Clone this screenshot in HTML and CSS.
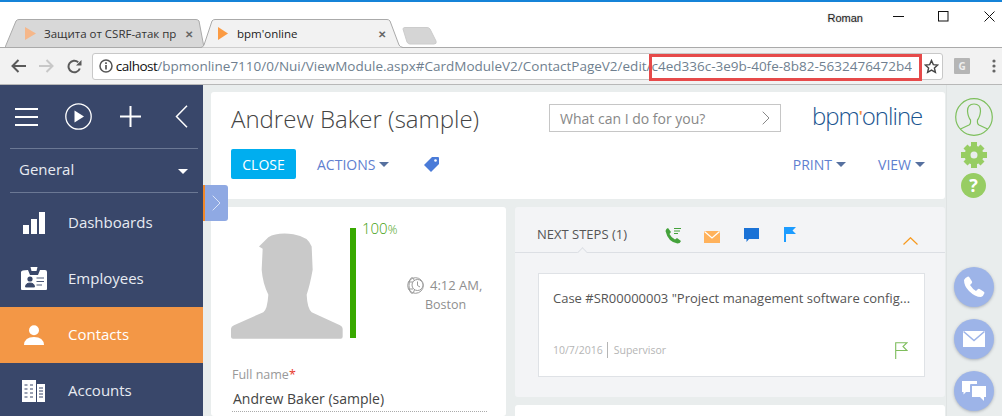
FILE: index.html
```html
<!DOCTYPE html>
<html lang="en">
<head>
<meta charset="utf-8">
<title>bpm'online</title>
<link rel="stylesheet" href="styles.css">
</head>
<body>
<div class="window">
  <header class="titlebar">
    <div class="tabs">
      <div class="tab tab-inactive">
        <svg class="tab-shape" width="206" height="29" viewBox="0 0 206 29"><path d="M0 28.500 L11 2 Q12 .5 14 .5 H191 Q193 .5 194 2 L199 28.500 Z" fill="#d8d8d8" stroke="#aaa"/></svg>
        <svg class="favicon faded" width="11" height="13" viewBox="0 0 11 13"><path d="M0 0 L11 6.500 L0 13 Z"/></svg>
        <span class="tab-title">Защита от CSRF-атак пр</span>
        <span class="tab-close">✕</span>
      </div>
      <div class="tab tab-active">
        <svg class="tab-shape" width="206" height="29" viewBox="0 0 206 29"><path d="M0 28.500 H1 Q3 28 4 26 L12 2 Q13 .5 15 .5 H187 Q189 .5 190 2 L199 26 Q200 28 203 28.500 H206" fill="#f2f2f2" stroke="#aaa"/></svg>
        <svg class="favicon" width="10" height="13" viewBox="0 0 10 13"><path d="M0 0 L10 6.500 L0 13 Z"/></svg>
        <span class="tab-title active-title">bpm'online</span>
        <span class="tab-close">✕</span>
      </div>
      <svg class="new-tab" width="36" height="18" viewBox="0 0 36 18"><path d="M1 2 Q1 .5 3 .5 H25 Q27 .5 28 2 L34 14 Q35 17 32 17 H8 Q6 17 5 15 Z" fill="#d5d5d5" stroke="#ccc"/></svg>
    </div>
    <div class="winctl">
      <span class="user">Roman</span>
      <svg class="ctl ctl-min" width="11" height="11" viewBox="0 0 11 11"><path d="M0 5.500 H11" stroke="#111"/></svg>
      <svg class="ctl ctl-max" width="11" height="11" viewBox="0 0 11 11"><rect x=".5" y=".5" width="9.500" height="9.500" fill="none" stroke="#111"/></svg>
      <svg class="ctl ctl-close" width="11" height="11" viewBox="0 0 11 11"><path d="M.5 .5 L10.500 10.500 M10.500 .5 L.5 10.500" stroke="#111"/></svg>
    </div>
  </header>

  <nav class="toolbar">
    <svg class="tool" width="15" height="14" viewBox="0 0 15 14"><path d="M15 7 H2 M7.500 1 L1.500 7 L7.500 13" fill="none" stroke="#5a5a5a" stroke-width="2"/></svg>
    <svg class="tool tool-fwd" width="15" height="14" viewBox="0 0 15 14"><path d="M0 7 H13 M7.500 1 L13.500 7 L7.500 13" fill="none" stroke="#c8c8c8" stroke-width="2"/></svg>
    <svg class="tool tool-reload" width="15" height="15" viewBox="0 0 15 15"><path d="M12.800 9.500 A5.800 5.800 0 1 1 11.200 3.200" fill="none" stroke="#5a5a5a" stroke-width="2"/><path d="M9 6.500 H14.500 V1 Z" fill="#5a5a5a"/></svg>
    <div class="omnibox">
      <svg class="info" width="14" height="14" viewBox="0 0 14 14"><circle cx="7" cy="7" r="6" fill="none" stroke="#555" stroke-width="1.500"/><path d="M7 6 V10.500 M7 3.300 V5" stroke="#555" stroke-width="1.700"/></svg>
      <div class="url"><div class="url-text"><span class="url-host">localhost</span>/bpmonline7110/0/Nui/ViewModule.aspx#CardModuleV2/ContactPageV2/edit/c4ed336c-3e9b-40fe-8b82-5632476472b4</div></div>
      <svg class="star" width="15" height="15" viewBox="0 0 15 15"><path d="M7.500 1.500 L9.300 5.600 L13.800 6 L10.400 9 L11.400 13.400 L7.500 11.100 L3.600 13.400 L4.600 9 L1.200 6 L5.700 5.600 Z" fill="none" stroke="#444" stroke-width="1.400"/></svg>
      <div class="highlight"></div>
    </div>
    <span class="ext">G</span>
    <svg class="menu-dots" width="4" height="14" viewBox="0 0 4 14"><circle cx="2" cy="2" r="1.600" fill="#666"/><circle cx="2" cy="7" r="1.600" fill="#666"/><circle cx="2" cy="12" r="1.600" fill="#666"/></svg>
  </nav>

  <div class="app">
    <aside class="sidebar">
      <div class="side-tools">
        <svg width="23" height="18" viewBox="0 0 23 18"><path d="M0 1 H23 M0 9 H23 M0 17 H23" stroke="#fff" stroke-width="2"/></svg>
        <svg class="st-play" width="27" height="27" viewBox="0 0 27 27"><circle cx="13.500" cy="13.500" r="12.700" fill="none" stroke="#fff" stroke-width="1.300"/><path d="M9.500 7.500 L19 13.500 L9.500 19.500 Z" fill="#fff"/></svg>
        <svg class="st-plus" width="21" height="21" viewBox="0 0 21 21"><path d="M10.500 0 V21 M0 10.500 H21" stroke="#fff" stroke-width="2"/></svg>
        <svg class="st-back" width="13" height="23" viewBox="0 0 13 23"><path d="M12 .7 L1.500 11.500 L12 22.300" fill="none" stroke="#fff" stroke-width="1.500"/></svg>
      </div>
      <div class="side-group">
        <span>General</span>
        <i class="side-caret"></i>
      </div>
      <ul class="side-menu">
        <li class="side-item">
          <span class="side-icon"><svg width="22" height="22" viewBox="0 0 22 22"><path d="M0 13 H6 V22 H0 Z M8 7 H14 V22 H8 Z M16 0 H22 V22 H16 Z" fill="#fff"/></svg></span>
          <span>Dashboards</span>
        </li>
        <li class="side-item">
          <span class="side-icon"><svg width="26" height="24" viewBox="0 0 26 24"><path d="M7 3 Q0 3 0 5 V22 Q0 23 1 23 H25 Q26 23 26 22 V5 Q26 3 24 3 H19 L17 8 H9 Z M9.500 0 H16.500 L15.500 4 H10.500 Z" fill="#fff"/><circle cx="9" cy="12" r="2.600" fill="#39476a"/><path d="M4.500 20 Q4.500 16 9 16 Q13.500 16 13.500 20 Z M15.500 11 H23 M15.500 14.500 H23 M15.500 18 H21" fill="#39476a" stroke="#39476a" stroke-width=".9"/></svg></span>
          <span>Employees</span>
        </li>
        <li class="side-item is-active">
          <span class="side-icon"><svg width="20" height="20" viewBox="0 0 20 20"><circle cx="10" cy="5.200" r="5" fill="#fff"/><path d="M0 20 Q.5 12 10 12 Q19.500 12 20 20 Z" fill="#fff"/></svg></span>
          <span>Contacts</span>
        </li>
        <li class="side-item">
          <span class="side-icon"><svg width="23" height="22" viewBox="0 0 23 22"><path d="M0 0 H14 V22 H0 Z M15 4 H23 V22 H15 Z" fill="#fff"/><path d="M2.500 5 H5.500 M8 5 H11 M2.500 9 H5.500 M8 9 H11 M2.500 13 H5.500 M8 13 H11 M2.500 17 H5.500 M8 17 H11 M17 8 H21 M17 11 H21 M17 14 H21 M17 17 H21" stroke="#39476a" stroke-width="1.200"/></svg></span>
          <span>Accounts</span>
        </li>
      </ul>
    </aside>
    <button class="side-toggle" type="button" aria-label="Expand">
      <svg width="9" height="16" viewBox="0 0 9 16"><path d="M.7 .7 L8 8 L.7 15.300" fill="none" stroke="#dbe4f7" stroke-width="1"/></svg>
    </button>

    <main class="content">
      <section class="page-head card">
        <div class="head-top">
          <h1 class="page-title">Andrew Baker (sample)</h1>
          <div class="search">
            <span>What can I do for you?</span>
            <svg width="8" height="14" viewBox="0 0 8 14"><path d="M.7 .7 L7 7 L.7 13.300" fill="none" stroke="#888" stroke-width="1"/></svg>
          </div>
          <div class="logo">bpm<span class="logo-tick">'</span>online</div>
        </div>
        <div class="head-actions">
          <button class="btn-close" type="button">CLOSE</button>
          <span class="link-btn">ACTIONS<i class="caret"></i></span>
          <svg class="tag" width="15" height="15" viewBox="0 0 15 15"><path d="M8 0 H14 Q15 0 15 1 V7 L7 15 L0 8 Z" fill="#4a7bd8"/><circle cx="11.500" cy="3.500" r="1.300" fill="#fff"/></svg>
          <span class="link-btn push-right">PRINT<i class="caret"></i></span>
          <span class="link-btn view-btn">VIEW<i class="caret"></i></span>
        </div>
      </section>

      <div class="columns">
        <section class="profile card">
          <div class="profile-top">
            <svg class="photo" width="112" height="106" viewBox="63 85 336 317"><path d="M63 372 Q63 365 72 361 L160 322 Q172 315 175 270 Q158 235 155 195 L158 132 L147 125 L175 97 Q200 82 250 88 Q295 95 305 125 L308 195 Q300 240 290 270 Q292 312 305 322 L390 361 Q398 365 398 372 V396 Q398 402 392 402 H69 Q63 402 63 396 Z" fill="#c9c9c9"/></svg>
            <div class="progress"></div>
            <div class="progress-val">100<small>%</small></div>
            <div class="local-time">
              <div class="time-line">
                <svg width="17" height="17" viewBox="0 0 17 17"><g fill="none" stroke="#999" stroke-width="1"><circle cx="8.500" cy="8.500" r="7.800"/><ellipse cx="5" cy="8.500" rx="3" ry="7.800"/><path d="M1 5 H6 M1 12 H6"/><circle cx="10.500" cy="8" r="5.500" fill="#fff"/><path d="M10.500 4.500 V8.500 L13 10"/></g></svg>
                <span>4:12 AM,</span>
              </div>
              <div class="city">Boston</div>
            </div>
          </div>
          <div class="field">
            <label class="field-label">Full name<em>*</em></label>
            <div class="field-value">Andrew Baker (sample)</div>
          </div>
        </section>

        <div class="right-col">
          <section class="steps">
            <div class="steps-head">
              <span class="steps-title">NEXT STEPS (1)</span>
              <svg class="step-ic ic-call" width="17" height="17" viewBox="0 0 17 17"><path d="M3 1 L6 5 L4.500 7 Q6.500 11 10 12.500 L12 11 L16 14 Q15 16.500 12.500 16.500 Q3 15 .5 4 Q1 1.500 3 1 Z" fill="#44a23b"/><path d="M9 1.500 H16 M9 4 H15 M9 6.500 H13" stroke="#44a23b"/></svg>
              <svg class="step-ic ic-mail" width="16" height="12" viewBox="0 0 16 12"><path d="M0 0 H16 V12 H0 Z" fill="#ffb25c"/><path d="M.5 .5 L8 7 L15.500 .5" fill="none" stroke="#fff" stroke-width="1.200"/></svg>
              <svg class="step-ic ic-chat" width="15" height="14" viewBox="0 0 15 14"><path d="M0 0 H15 V11 H5 L2.500 14 V11 H0 Z" fill="#1a72d6"/></svg>
              <svg class="step-ic ic-flag" width="12" height="15" viewBox="0 0 12 15"><path d="M0 0 H12 L8.500 3.500 L12 7 H2 V15 H0 Z" fill="#1c9cff"/></svg>
              <svg class="collapse" width="15" height="8" viewBox="0 0 15 8"><path d="M.5 7.500 L7.500 .7 L14.500 7.500" fill="none" stroke="#f79a1f" stroke-width="1.200"/></svg>
              <i class="notch"></i>
            </div>
            <article class="step-card">
              <p class="step-text">Case #SR00000003 "Project management software config...</p>
              <div class="step-meta">
                <span>10/7/2016</span><span class="meta-sep">Supervisor</span>
                <svg class="step-flag" width="13" height="17" viewBox="0 0 13 17"><path d="M.7 17 V.7 H12 L8 4.500 L12 8.500 H.7" fill="none" stroke="#7ebd5c" stroke-width="1.100"/></svg>
              </div>
            </article>
          </section>
          <section class="next-card card"></section>
        </div>
      </div>
    </main>

    <aside class="rail">
      <svg class="rail-user" width="38" height="38" viewBox="0 0 38 38"><circle cx="19" cy="19" r="18.300" fill="none" stroke="#7dbf5c" stroke-width="1.200"/><path d="M5.500 31 L14 27 Q16 26 15.500 22 Q13 19 12.500 13 Q12.500 6 19 6 Q25.500 6 25.500 13 Q25 19 22.500 22 Q22 26 24 27 L32.500 31" fill="none" stroke="#7dbf5c" stroke-width="1.200"/></svg>
      <svg class="rail-gear" width="26" height="26" viewBox="0 0 26 26"><circle cx="13" cy="13" r="6.500" fill="none" stroke="#97cd63" stroke-width="6"/><path d="M10 0 H16 V5 H10 Z M10 21 H16 V26 H10 Z M0 10 H5 V16 H0 Z M21 10 H26 V16 H21 Z M2.500 6.500 L6.500 2.500 L10 6 L6 10 Z M19.500 2.500 L23.500 6.500 L20 10 L16 6 Z M2.500 19.500 L6 16 L10 20 L6.500 23.500 Z M20 16 L23.500 19.500 L19.500 23.500 L16 20 Z" fill="#97cd63"/></svg>
      <div class="rail-help">?</div>
      <div class="rail-actions">
        <div class="round-btn">
          <svg width="22" height="22" viewBox="0 0 22 22"><path d="M5 .5 Q2 1.500 1 4 Q1 10 6 15 Q12 21 18 21 Q20.500 20 21.500 17 Q21.500 16 20.500 15.500 L16.500 13 Q15.500 12.500 14.500 13.500 L13 15 Q10 13.500 7 9 L8.500 7.500 Q9.500 6.500 9 5.500 L6.500 1.500 Q6 .5 5 .5 Z" fill="#fff"/></svg>
        </div>
        <div class="round-btn">
          <svg width="22" height="16" viewBox="0 0 22 16"><path d="M0 0 H22 V16 H0 Z" fill="#fff"/><path d="M.5 .5 L11 9.500 L21.500 .5" fill="none" stroke="#9db4e8" stroke-width="1.500"/></svg>
        </div>
        <div class="round-btn">
          <svg width="24" height="21" viewBox="0 0 24 21"><path d="M0 0 H15 V3 H9 Q8 3 8 4 V11 H4 L1.500 13.500 V11 H0 Z" fill="#fff"/><path d="M10 5 H24 V16 H22 V20 L18 16 H10 Z" fill="#fff"/></svg>
        </div>
      </div>
    </aside>
  </div>
</div>
</body>
</html>
```

FILE: styles.css
```css
* { box-sizing: border-box; }
html, body { margin: 0; padding: 0; height: 416px; overflow: hidden; }
body { font-family: "Open Sans", "Liberation Sans", sans-serif; background: #fff; color: #444; }
ul { margin: 0; padding: 0; list-style: none; }
p, h1 { margin: 0; }
button { font-family: inherit; border: 0; padding: 0; }
svg { display: block; flex: none; }

.window { width: 1002px; height: 416px; display: flex; flex-direction: column; overflow: hidden; }

/* browser chrome */
.titlebar { height: 47px; flex: none; border-top: 2px solid #1583d8; display: flex; justify-content: space-between; background: #fff; position: relative; }
.tabs { display: flex; align-items: flex-end; padding-left: 5px; margin-bottom: -1px; position: relative; z-index: 1; }
.tab { position: relative; width: 206px; height: 29px; display: flex; align-items: center; font-size: 11.500px; color: #333; }
.tab-inactive { padding-left: 20px; }
.tab-active { margin-left: -11px; padding-left: 18px; }
.tab-shape { position: absolute; left: 0; top: 0; }
.favicon { position: relative; fill: #fb9b43; margin-top: -1px; }
.faded { fill: #f5b78a; }
.tab-title { position: relative; margin-left: 8px; width: 135px; white-space: nowrap; }
.active-title { margin-left: 9px; width: 141px; color: #222; }
.tab-close { position: relative; margin-left: 6px; font-size: 10px; font-weight: 700; color: #666; }
.active-title + .tab-close { margin-left: 0; }
.new-tab { margin: 0 0 3px -4px; }
.winctl { display: flex; align-items: flex-start; padding-top: 9px; padding-right: 7px; }
.user { font-size: 11px; line-height: 12px; color: #222; margin-top: 1px; margin-right: 30px; text-shadow: 0 0 2px #bbb; font-family: "Liberation Sans", sans-serif; }
.ctl-max { margin-left: 34px; }
.ctl-close { margin-left: 35px; }

.toolbar { height: 38px; flex: none; background: #f2f2f2; border-top: 1px solid #aaa; border-bottom: 1px solid #b8b8b8; display: flex; align-items: center; padding-left: 11px; }
.tool-fwd { margin-left: 13px; }
.tool-reload { margin-left: 13px; margin-right: 10px; }
.omnibox { position: relative; width: 851px; height: 27px; background: #fff; border: 1px solid #c8c8c8; border-radius: 3px; display: flex; align-items: center; padding-left: 6px; }
.url { width: 796px; overflow: hidden; display: flex; justify-content: flex-end; margin-left: 3px; }
.url-text { flex: none; white-space: nowrap; font-size: 13.500px; line-height: 20px; color: #6f7f8f; }
.url-host { color: #111; letter-spacing: -.5px; }
.star { margin-left: 12px; }
.highlight { position: absolute; left: 556px; top: 0; width: 273px; height: 27px; border: 3px solid #e64a4a; }
.ext { margin-left: 11px; width: 16px; height: 16px; border-radius: 1px; background: #b5b5b5; color: #eee; font-size: 10px; font-weight: 700; line-height: 16px; text-align: center; }
.menu-dots { margin-left: 22px; }

/* application */
.app { flex: 1; min-height: 0; display: flex; background: #e9eded; position: relative; }
.sidebar { width: 203px; flex: none; background: #39476a; color: #e8ebf2; }
.side-tools { margin: 0 5px 0 10px; height: 64px; border-bottom: 1px solid #6b7894; display: flex; align-items: center; padding: 0 5px; }
.st-play { margin-left: 27px; }
.st-plus { margin-left: 28px; }
.st-back { margin-left: 34px; }
.side-group { margin: 0 5px 0 10px; height: 44px; border-bottom: 1px solid #6b7894; display: flex; align-items: center; justify-content: space-between; padding: 0 10px 3px 9px; font-size: 15px; }
.side-caret { width: 0; height: 0; border: 5px solid transparent; border-top-color: #fff; border-bottom: 0; margin-top: 5px; }
.side-menu { margin-top: 2px; }
.side-item { height: 56px; display: flex; align-items: center; font-size: 15px; }
.side-item > span:last-child { margin-bottom: 2px; }
.side-icon { width: 67px; margin-right: 1px; display: flex; justify-content: center; }
.side-item.is-active { background: #f39746; color: #fff; }
.side-toggle { position: absolute; left: 203px; top: 100px; width: 25px; height: 36px; background: #8fa9e3; border-left: 2px solid #f0882a; border-radius: 0 3px 3px 0; display: flex; align-items: center; justify-content: center; z-index: 2; }

.content { flex: 1; min-width: 0; padding: 7px 1px 0 8px; display: flex; flex-direction: column; gap: 8px; }
.card { background: #fff; border-radius: 3px; }
.page-head { height: 107px; flex: none; padding: 0 20px; }
.head-top { display: flex; align-items: flex-start; height: 57px; }
.page-title { font-size: 24px; font-weight: 300; line-height: 33px; color: #444; margin-top: 10px; width: 318px; white-space: nowrap; }
.search { margin-top: 12px; width: 232px; height: 28px; border: 1px solid #c6c6c6; display: flex; align-items: center; justify-content: space-between; padding: 0 10px; font-size: 14px; color: #888; }
.logo { margin-left: 31px; margin-top: 8px; font-size: 24px; font-weight: 300; line-height: 31px; color: #1a5590; letter-spacing: -1px; white-space: nowrap; }
.logo-tick { color: #f5913c; font-weight: 700; font-size: 15px; vertical-align: 4px; }
.head-actions { display: flex; align-items: center; height: 30px; font-size: 14px; }
.btn-close { width: 65px; height: 30px; background: #00aeef; color: #fff; font-size: 14px; border-radius: 2px; }
.link-btn { color: #5f80cf; display: flex; align-items: center; margin-left: 21px; }
.caret { display: block; width: 0; height: 0; margin-left: 4px; border: 5px solid transparent; border-top-color: #56709f; border-bottom: 0; }
.tag { margin-left: 35px; }
.push-right { margin-left: auto; }
.view-btn { margin-left: 32px; margin-right: 0; }

.columns { flex: 1; min-height: 0; display: flex; gap: 9px; }
.profile { width: 295px; flex: none; padding: 0 19px 0 20px; }
.profile-top { position: relative; height: 132px; display: flex; padding-top: 26px; }
.progress { width: 6px; height: 110px; margin: -5px 0 0 7px; background: #38a900; }
.progress-val { position: absolute; left: 131px; top: 9px; font-size: 15px; font-weight: 300; line-height: 24px; color: #3fa010; }
.progress-val small { font-size: 12px; }
.local-time { margin: 43px 0 0 51px; font-size: 13px; color: #8f8f8f; line-height: 19px; white-space: nowrap; }
.time-line { display: flex; align-items: center; gap: 6px; }
.city { margin-left: 18px; font-size: 12.500px; }
.field { padding: 27px 0 0 1px; }
.field-label { display: block; font-size: 12.500px; line-height: 18px; color: #999; font-weight: 400; }
.field-label em { color: #e8372c; font-style: normal; }
.field-value { margin-top: 5px; padding: 0 0 3px 1px; font-size: 14px; line-height: 19px; color: #444; border-bottom: 1px dotted #aaa; }

.right-col { width: 430px; flex: none; display: flex; flex-direction: column; gap: 8px; }
.steps { height: 190px; flex: none; background: #f3f4f6; border-radius: 3px; }
.steps-head { position: relative; height: 46px; border-bottom: 1px solid #dcdfe4; display: flex; align-items: flex-start; padding-left: 22px; }
.steps-title { font-size: 13px; line-height: 18px; color: #555; margin-top: 18px; width: 128px; white-space: nowrap; }
.step-ic { margin-top: 20px; }
.ic-mail { margin-top: 24px; margin-left: 22px; }
.ic-chat { margin-top: 21px; margin-left: 24px; }
.ic-flag { margin-top: 20px; margin-left: 25px; }
.collapse { position: absolute; right: 27px; top: 30px; }
.notch { position: absolute; left: 62px; bottom: -1px; width: 10px; height: 6px; overflow: hidden; }
.notch::before { content: ""; position: absolute; left: 1px; top: 2px; width: 8px; height: 8px; background: #f3f4f6; border-left: 1px solid #dcdfe4; border-top: 1px solid #dcdfe4; transform: rotate(45deg); }
.step-card { margin: 20px 20px 0 23px; height: 104px; background: #fff; border: 1px solid #dfe2e6; padding: 14px 14px 0 14px; display: flex; flex-direction: column; }
.step-text { font-size: 13px; line-height: 20px; color: #555; white-space: nowrap; }
.step-meta { margin-top: 33px; display: flex; align-items: center; font-size: 10.500px; color: #b5b5b5; height: 18px; }
.meta-sep { margin-left: 4px; padding-left: 6px; border-left: 1px solid #b5b5b5; line-height: 16px; }
.step-flag { margin-left: auto; margin-right: 2px; }
.next-card { height: 40px; flex: none; }

.rail { width: 56px; flex: none; border-left: 1px solid #dfe3e3; display: flex; flex-direction: column; align-items: center; padding: 13px 2px 0 0; }
.rail-gear { margin-top: 6px; }
.rail-help { margin-top: 5px; width: 25px; height: 25px; border-radius: 50%; background: #97cd63; color: #fff; font-size: 18px; font-weight: 700; line-height: 25px; text-align: center; }
.rail-actions { margin-top: 69px; display: flex; flex-direction: column; gap: 12px; }
.round-btn { width: 40px; height: 40px; border-radius: 50%; background: #9db4e8; box-shadow: 0 1px 3px rgba(60, 70, 90, .35); display: flex; align-items: center; justify-content: center; }
```
